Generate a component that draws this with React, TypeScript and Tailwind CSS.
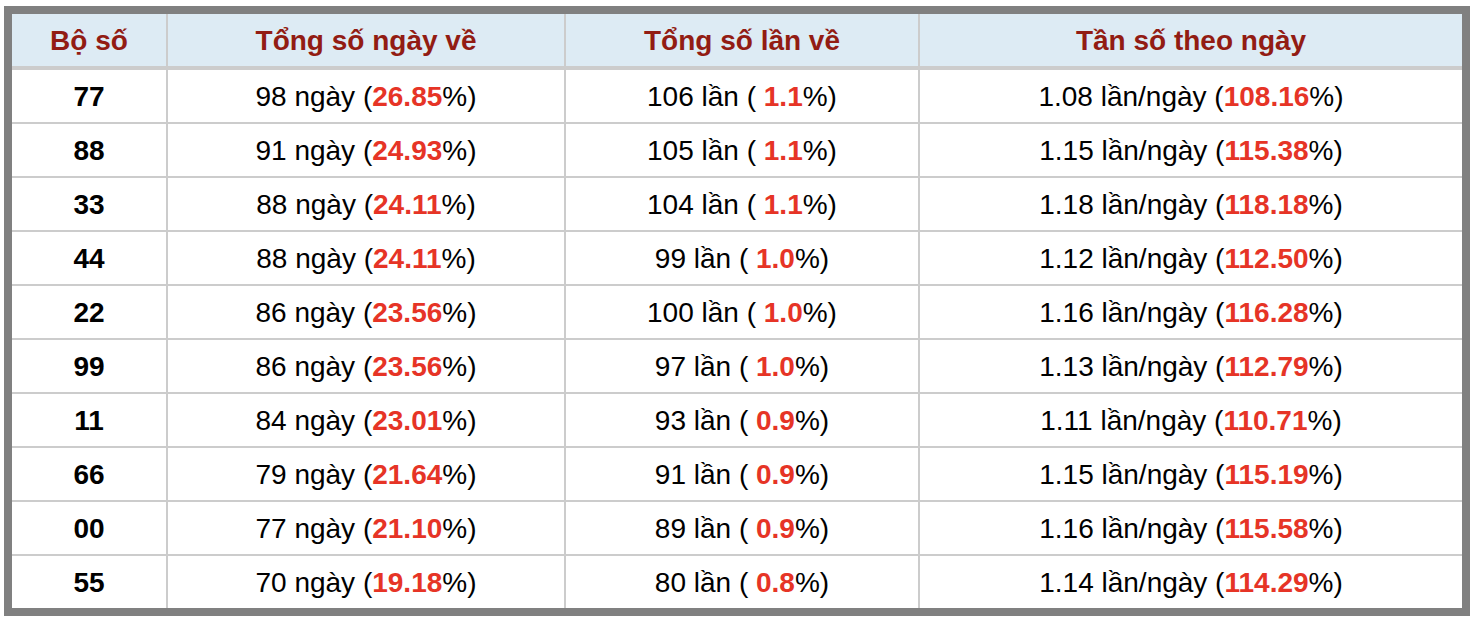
const rows = [
  ["77", "98", "26.85", "106", "1.1", "1.08", "108.16"],
  ["88", "91", "24.93", "105", "1.1", "1.15", "115.38"],
  ["33", "88", "24.11", "104", "1.1", "1.18", "118.18"],
  ["44", "88", "24.11", "99", "1.0", "1.12", "112.50"],
  ["22", "86", "23.56", "100", "1.0", "1.16", "116.28"],
  ["99", "86", "23.56", "97", "1.0", "1.13", "112.79"],
  ["11", "84", "23.01", "93", "0.9", "1.11", "110.71"],
  ["66", "79", "21.64", "91", "0.9", "1.15", "115.19"],
  ["00", "77", "21.10", "89", "0.9", "1.16", "115.58"],
  ["55", "70", "19.18", "80", "0.8", "1.14", "114.29"],
];

const cols = "grid grid-cols-[154px_396px_352px_542px] gap-x-[2px]";
const cell = "flex items-center justify-center pt-[2px]";

const Red = ({ v }: { v: string }) => <b className="font-bold text-[#e63426]">{v}</b>;

export default function App() {
  return (
    <div className="pt-[6px] pl-[4px] bg-white min-h-[624px]" style={{ fontFamily: '"Liberation Sans", Arial, sans-serif' }}>
      <div className="w-[1466px] border-8 border-[#808080] bg-[#cccccc] flex flex-col gap-[2px] text-[28px] leading-none text-black">
        <div className={`${cols} h-[52px] mb-[2px] font-bold text-[#921c13]`}>
          <div className={`${cell} bg-[#ddebf4]`}>Bộ số</div>
          <div className={`${cell} bg-[#ddebf4]`}>Tổng số ngày về</div>
          <div className={`${cell} bg-[#ddebf4]`}>Tổng số lần về</div>
          <div className={`${cell} bg-[#ddebf4]`}>Tần số theo ngày</div>
        </div>
        {rows.map((r) => (
          <div key={r[0]} className={`${cols} h-[52px]`}>
            <div className={`${cell} bg-white font-bold`}>{r[0]}</div>
            <div className={`${cell} bg-white whitespace-pre`}>
              {r[1]} ngày (<Red v={r[2]} />%)
            </div>
            <div className={`${cell} bg-white whitespace-pre`}>
              {r[3]} lần ( <Red v={r[4]} />%)
            </div>
            <div className={`${cell} bg-white whitespace-pre`}>
              {r[5]} lần/ngày (<Red v={r[6]} />%)
            </div>
          </div>
        ))}
      </div>
    </div>
  );
}
